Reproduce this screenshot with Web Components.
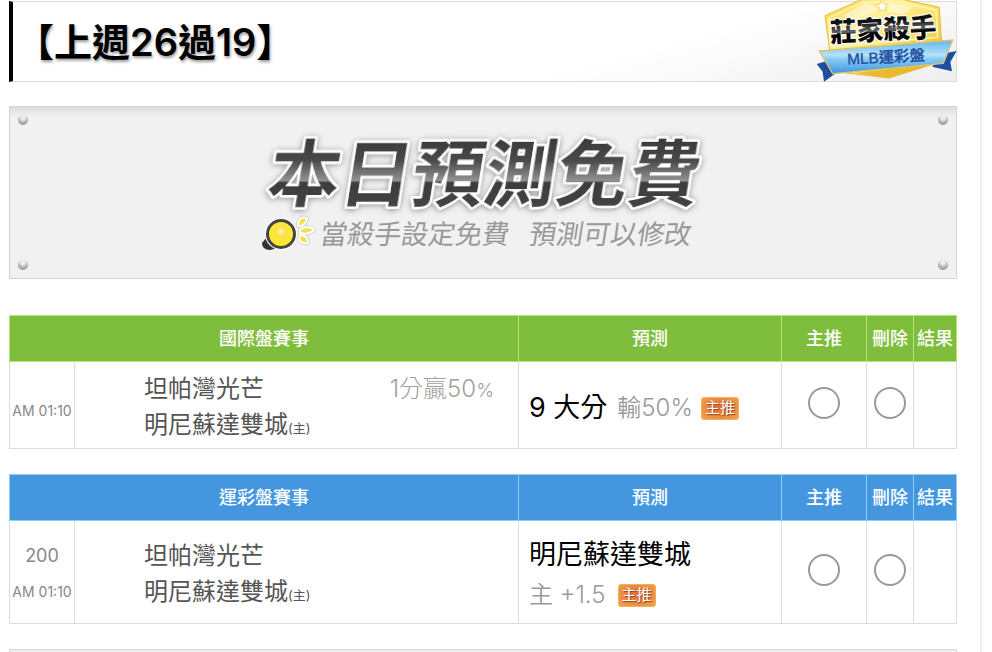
<!DOCTYPE html>
<html lang="zh-Hant">
<head>
<meta charset="utf-8">
<meta name="viewport" content="width=device-width, initial-scale=1">
<title>上週26過19</title>
<style>
  html { height: 100%; }
  body {
    margin: 0; min-height: 100%; display: flex; background: #fff;
    font-family: Inter, "Noto Sans CJK TC", sans-serif;
  }
  page-frame { flex: 1; }
</style>
</head>
<body>
<page-frame>
  <record-header>【上週26過19】</record-header>
  <free-banner></free-banner>
  <odds-table label="國際盤賽事" theme="green">
    <time-cell slot="time" class="low">AM 01:10</time-cell>
    <match-teams slot="match" away="坦帕灣光芒" home="明尼蘇達雙城" spread="1分贏50" unit="%"></match-teams>
    <pick-cell slot="pick">9 大分 <span slot="odds">輸50%</span></pick-cell>
  </odds-table>
  <odds-table label="運彩盤賽事" theme="blue">
    <time-cell slot="time" number="200">AM 01:10</time-cell>
    <match-teams slot="match" away="坦帕灣光芒" home="明尼蘇達雙城"></match-teams>
    <pick-cell slot="pick" stacked>明尼蘇達雙城<span slot="odds">主 +1.5</span></pick-cell>
  </odds-table>
  <next-panel></next-panel>
</page-frame>

<script>
const define = (name, markup) => {
  customElements.define(name, class extends HTMLElement {
    constructor() {
      super();
      this.attachShadow({ mode: 'open' });
    }
    connectedCallback() {
      const t = document.createElement('template');
      t.innerHTML = typeof markup === 'function' ? markup(this) : markup;
      this.shadowRoot.replaceChildren(t.content.cloneNode(true));
    }
  });
};

define('main-tag', `
  <style>
    :host {
      display: inline-flex; align-items: center; justify-content: center;
      box-sizing: border-box; width: 38px; height: 23px; border-radius: 3px;
      border: 1px solid #f3b04c;
      background: radial-gradient(ellipse at 50% 45%, #e2703a 0%, #ea8743 50%, #f2a552 100%);
      color: #fff; font-size: 15px; line-height: 20px; font-weight: 400;
      text-shadow: 1px 1px 1px #8a4420;
    }
  </style>主推`);

define('time-cell', el => `
  <style>
    :host { display: block; padding-top: 3px; text-align: center; color: #888; font-size: 14px; line-height: 36px; white-space: nowrap; }
    :host(.low) { padding-top: 11px; }
    .no { font-size: 18px; }
  </style>
  ${el.hasAttribute('number') ? `<div class="no">${el.getAttribute('number')}</div>` : ''}
  <div><slot></slot></div>`);

define('match-teams', el => `
  <style>
    :host { display: flex; justify-content: space-between; padding: 6px 24px 0 69px;
      font-size: 24px; line-height: 36px; font-weight: 400; color: #555; }
    small { font-size: 13px; }
    .spread { color: #a0a0a0; font-weight: 300; }
    .spread small { font-size: 19px; }
    .teams div { white-space: nowrap; }
  </style>
  <div class="teams">
    <div>${el.getAttribute('away')}</div>
    <div>${el.getAttribute('home')}<small>(主)</small></div>
  </div>
  ${el.hasAttribute('spread') ? `<div class="spread">${el.getAttribute('spread')}<small>${el.getAttribute('unit')}</small></div>` : ''}`);

define('pick-cell', `
  <style>
    :host { display: flex; align-items: center; gap: 10px; padding: 6px 0 0 10px; white-space: nowrap; }
    :host([stacked]) { flex-direction: column; align-items: flex-start; gap: 0; }
    .pick { font-size: 27px; line-height: 40px; color: #000; font-weight: 400; }
    .sub { display: flex; align-items: center; gap: 8px; font-size: 24px; line-height: 40px; font-weight: 350; color: #999; }
    :host([stacked]) .sub { gap: 12px; }
  </style>
  <div class="pick"><slot></slot></div>
  <div class="sub"><slot name="odds"></slot><main-tag></main-tag></div>`);

define('odds-table', el => `
  <style>
    :host { display: block; --head: #7fbe3c; --line: #b5e67c; }
    :host([theme="blue"]) { --head: #4497df; --line: #8dd0f5; }
    table { width: 100%; border-collapse: collapse; table-layout: fixed; }
    .time { width: 65px; } .pred { width: 263px; } .main { width: 85px; } .del { width: 47px; } .res { width: 43px; }
    th { height: 45px; padding: 0; background: var(--head); border: 1px solid var(--line);
      color: #fff; font-size: 18px; line-height: 24px; font-weight: 500; white-space: nowrap; }
    td { height: 86px; padding: 0; border: 1px solid #ddd; }
    :host([theme="blue"]) td { height: 102px; }
    .radio { text-align: center; }
    input { appearance: none; box-sizing: border-box; display: block; width: 32px; height: 32px;
      margin: 0 auto 4px; border: 2px solid #999; border-radius: 50%; background: #fff; }
    input:checked { background: radial-gradient(circle, #555 0 8px, #fff 9px); }
  </style>
  <table>
    <colgroup><col class="time"><col><col class="pred"><col class="main"><col class="del"><col class="res"></colgroup>
    <thead><tr><th colspan="2">${el.getAttribute('label')}</th><th>預測</th><th>主推</th><th>刪除</th><th>結果</th></tr></thead>
    <tbody><tr>
      <td><slot name="time"></slot></td>
      <td><slot name="match"></slot></td>
      <td><slot name="pick"></slot></td>
      <td class="radio"><input type="radio" name="action" aria-label="主推"></td>
      <td class="radio"><input type="radio" name="action" aria-label="刪除"></td>
      <td></td>
    </tr></tbody>
  </table>`);

define('killer-badge', `
  <style>:host { display: block; } svg { display: block; }</style>
  <svg width="141" height="82" viewBox="48 0 423 246" role="img" aria-label="莊家殺手 MLB運彩盤">
    <defs>
      <linearGradient id="gold" x1="0" y1="0" x2="1" y2="1">
        <stop offset="0" stop-color="#f7cf3c"/><stop offset=".3" stop-color="#fff3a0"/>
        <stop offset=".55" stop-color="#fbe36a"/><stop offset="1" stop-color="#e3a91e"/>
      </linearGradient>
      <linearGradient id="sky" x1="0" y1="0" x2="0" y2="1">
        <stop offset="0" stop-color="#5fb4ee"/><stop offset=".45" stop-color="#b5e2fb"/>
        <stop offset=".55" stop-color="#8dcdf6"/><stop offset="1" stop-color="#3b93dd"/>
      </linearGradient>
      <linearGradient id="ink" x1="0" y1="0" x2="0" y2="1">
        <stop offset=".2" stop-color="#111"/><stop offset=".5" stop-color="#666"/>
        <stop offset=".56" stop-color="#000"/><stop offset="1" stop-color="#111"/>
      </linearGradient>
    </defs>
    <path d="M50 192 L84 182 L104 222 L72 245 L68 215 Z" fill="#1f4da0"/>
    <path d="M470 153 L436 160 L396 200 L456 214 L451 186 Z" fill="#1f4da0"/>
    <path d="M75 47 L190 -4 H298 L418 22 L428 184 L266 234 L98 214 Z" fill="url(#gold)" stroke="#e8b930" stroke-width="3"/>
    <path d="M86 54 L192 6 H296 L408 30 L413 112 L92 140 Z" fill="none" stroke="#fff6b8" stroke-width="4"/>
    <path d="M130 44 L200 6 L236 30 L150 64 Z M270 10 L340 20 L310 44 L262 34 Z" fill="#fff" opacity=".45"/>
    <path d="M244 2 L250 12 L263 13 L255 21 L258 33 L247 28 L236 34 L238 22 L229 14 L240 12 Z" fill="#fff" stroke="#efc65a" stroke-width="2"/>
    <path d="M170 218 L266 234 L385 197 L300 204 Z" fill="#e9b92f"/>
    <path d="M58 153 L458 120 L430 190 L98 221 Z" fill="url(#sky)" stroke="#d9c46c" stroke-width="4"/>
    <g transform="rotate(-3 250 100)" font-family="'Liberation Sans', 'Noto Sans CJK TC', sans-serif">
      <text x="90" y="118" font-size="80" font-weight="900" fill="url(#ink)" stroke="#fff" stroke-width="7" stroke-linejoin="round" paint-order="stroke">莊家殺手</text>
      <text x="138" y="188" font-size="46" font-weight="500" fill="#1d4d9e" stroke="#1d4d9e" stroke-width="1">MLB運彩盤</text>
    </g>
  </svg>`);

define('record-header', `
  <style>
    :host { display: flex; align-items: center; position: relative; box-sizing: border-box; min-height: 81px; margin-top: 1px;
      border: 1px solid #ddd; border-left: 4px solid #000;
      background: linear-gradient(165deg, #fff 65%, #eee 100%); }
    h1 { margin: 0 0 0 3px; font-size: 38px; line-height: 56px; font-weight: 600; color: #000;
      text-shadow: 1px 2px 3px #999; white-space: nowrap; }
    killer-badge { position: absolute; right: -1px; top: -2px; }
  </style>
  <h1><slot></slot></h1>
  <killer-badge></killer-badge>`);

define('free-banner', `
  <style>
    :host { display: grid; grid-template-columns: 10px 1fr 10px; align-content: space-between; box-sizing: border-box;
      min-height: 173px; padding: 8px; border: 1px solid #d4d4d4;
      background: linear-gradient(#dedede, #f1f1f1 10px); }
    i { width: 10px; height: 10px; border-radius: 50%; background: radial-gradient(circle at 50% 25%, #eee 0 20%, #bbb 50%, #888 90%); }
    .low { align-self: end; }
    svg { grid-row: 1 / 3; grid-column: 2; justify-self: center; display: block; overflow: visible; margin-top: 18px; }
    .b { grid-column: 3; }
  </style>
  <i></i>
  <svg width="440" height="120" viewBox="0 0 440 120" role="img" aria-label="本日預測免費">
    <defs>
      <linearGradient id="steel" gradientUnits="userSpaceOnUse" x1="0" y1="-60" x2="0" y2="6">
        <stop offset="0" stop-color="#3c3c3c"/><stop offset=".3" stop-color="#484848"/>
        <stop offset=".62" stop-color="#929292"/><stop offset=".64" stop-color="#3c3c3c"/><stop offset="1" stop-color="#444"/>
      </linearGradient>
      <radialGradient id="bulb" cx=".5" cy=".4"><stop offset="0" stop-color="#fffbe0"/><stop offset=".35" stop-color="#ffe04a"/><stop offset="1" stop-color="#fbe92f"/></radialGradient>
      <filter id="soft" x="-10%" y="-20%" width="120%" height="140%"><feDropShadow dx="0" dy="1" stdDeviation="3" flood-color="#777" flood-opacity=".8"/></filter>
    </defs>
    <g font-family="'Liberation Sans', 'Noto Sans CJK TC', sans-serif">
      <text transform="translate(2 67) skewX(-9)" font-size="72" font-weight="700" fill="url(#steel)" stroke="#fff" stroke-width="5" stroke-linejoin="round" paint-order="stroke" filter="url(#soft)">本日預測免費</text>
      <text transform="translate(56 111) skewX(-9)" font-size="27" fill="#999">當殺手設定免費</text>
      <text transform="translate(265 111) skewX(-9)" font-size="27" fill="#999">預測可以修改</text>
    </g>
    <path d="M4 104 L-1 110 Q-1 117 7 117 L15 115 Z" fill="#333"/>
    <circle cx="18" cy="101" r="16" fill="#fff"/>
    <circle cx="18" cy="101" r="15" fill="#444"/>
    <circle cx="18" cy="101" r="12" fill="url(#bulb)"/>
    <g stroke-linejoin="round" paint-order="stroke" fill="#f6e04a">
      <g stroke="#d4d4d4" stroke-width="6">
        <path d="M36 90 Q38 84 43 86 Q41 92 36 92 Z"/><path d="M38 97 Q44 93 50 97 Q44 101 38 99 Z"/><path d="M38 103 Q43 103 44 109 Q39 110 37 106 Z"/>
      </g>
      <g stroke="#fff" stroke-width="4">
        <path d="M36 90 Q38 84 43 86 Q41 92 36 92 Z"/><path d="M38 97 Q44 93 50 97 Q44 101 38 99 Z"/><path d="M38 103 Q43 103 44 109 Q39 110 37 106 Z"/>
      </g>
    </g>
  </svg>
  <i class="b"></i>
  <i class="low"></i>
  <i class="b low"></i>`);

define('next-panel', `
  <style>:host { display: block; flex: 1; box-sizing: border-box; min-height: 3px; border: 1px solid #d8d8d8; border-bottom: 0; background: #eee; }</style>`);

define('page-frame', `
  <style>
    :host { display: flex; flex-direction: column; box-sizing: border-box; margin-right: 10px; padding: 0 23px 0 9px; border-right: 2px solid #eee; }
    ::slotted(free-banner) { margin: 24px 0 11px; }
    ::slotted(odds-table), ::slotted(next-panel) { margin-top: 25px; }
  </style>
  <slot></slot>`);
</script>
</body>
</html>
